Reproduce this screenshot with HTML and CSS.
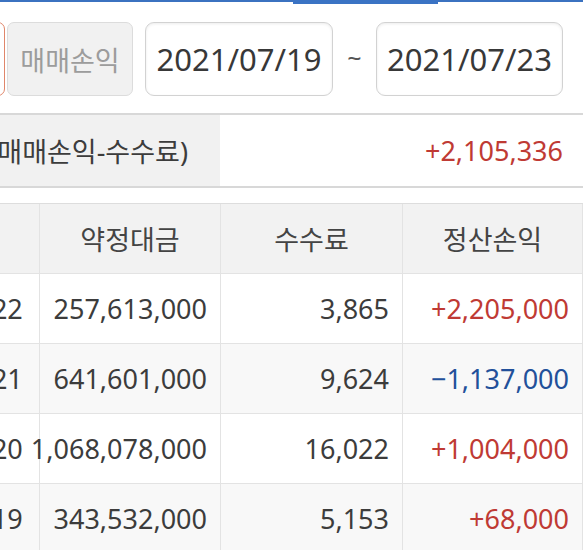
FILE: index.html
```html
<!DOCTYPE html>
<html lang="ko">
<head>
<meta charset="utf-8">
<title>매매손익</title>
<link rel="stylesheet" href="styles.css">
</head>
<body>
<div class="viewport">
  <div class="page">
    <div class="tabs">
      <div class="tab"></div>
      <div class="tab"></div>
      <div class="tab"></div>
      <div class="tab active"></div>
      <div class="tab"></div>
    </div>

    <div class="filter">
      <div class="seg seg-on">일별손익</div>
      <div class="seg seg-off">매매손익</div>
      <div class="date">2021/07/19</div>
      <div class="tilde">~</div>
      <div class="date date-end">2021/07/23</div>
    </div>

    <div class="summary">
      <div class="sum-label">정산손익(매매손익-수수료)</div>
      <div class="sum-value up">+2,105,336</div>
    </div>

    <div class="table">
      <div class="th">일자</div>
      <div class="th">약정대금</div>
      <div class="th">수수료</div>
      <div class="th">정산손익</div>

      <div class="td c">2021/07/22</div>
      <div class="td">257,613,000</div>
      <div class="td">3,865</div>
      <div class="td up">+2,205,000</div>

      <div class="td c alt">2021/07/21</div>
      <div class="td alt">641,601,000</div>
      <div class="td alt">9,624</div>
      <div class="td alt down">−1,137,000</div>

      <div class="td c">2021/07/20</div>
      <div class="td">1,068,078,000</div>
      <div class="td">16,022</div>
      <div class="td up">+1,004,000</div>

      <div class="td c alt">2021/07/19</div>
      <div class="td alt">343,532,000</div>
      <div class="td alt">5,153</div>
      <div class="td alt up">+68,000</div>
    </div>
  </div>
</div>
</body>
</html>
```

FILE: styles.css
```css
html, body {
  margin: 0;
  padding: 0;
  background: #ffffff;
}

body {
  font-family: "Noto Sans", "Noto Sans CJK KR", sans-serif;
  color: #3a3a3a;
}

.viewport {
  width: 583px;
  height: 550px;
  overflow: hidden;
  display: flex;
  justify-content: flex-end;
}

.page {
  flex: 0 0 726px;
  width: 726px;
}

/* tab indicator strip */
.tabs {
  display: flex;
  align-items: flex-start;
  height: 4px;
}

.tab {
  flex: 1;
  height: 2px;
  background: #3b72c0;
}

.tab.active {
  height: 4px;
  background: #3a73c4;
}

/* filter row */
.filter {
  margin-top: 18px;
  height: 74px;
  display: flex;
  align-items: center;
  justify-content: flex-end;
  padding-right: 20px;
}

.seg {
  box-sizing: border-box;
  width: 126px;
  height: 74px;
  border-radius: 7px;
  display: flex;
  align-items: center;
  justify-content: center;
  font-size: 27px;
}

.seg-on {
  border: 1px solid #e0866a;
  color: #d9623f;
  margin-right: 2px;
  justify-content: flex-start;
  padding-left: 12px;
}

.seg-off {
  border: 1px solid #dcdcdc;
  background: #f1f1f1;
  color: #9c9c9c;
  margin-right: 12px;
}

.date {
  box-sizing: border-box;
  width: 188px;
  height: 74px;
  border: 1px solid #d2d2d2;
  border-radius: 9px;
  background: #ffffff;
  box-shadow: inset 0 1px 3px rgba(0, 0, 0, 0.08);
  display: flex;
  align-items: center;
  justify-content: center;
  font-size: 31px;
  color: #383838;
}

.date-end {
  width: 187px;
}

.tilde {
  width: 43px;
  text-align: center;
  font-size: 25px;
  line-height: 1;
  margin-top: -4px;
  color: #555555;
}

/* summary */
.summary {
  margin-top: 17px;
  display: grid;
  grid-template-columns: 363px 363px;
  border-top: 2px solid #d8d8d8;
  border-bottom: 2px solid #d8d8d8;
  height: 71px;
}

.sum-label {
  background: #f1f1f1;
  display: flex;
  align-items: center;
  justify-content: flex-end;
  padding-right: 32px;
  font-size: 27px;
  color: #3c3c3c;
  white-space: nowrap;
  overflow: hidden;
}

.sum-value {
  display: flex;
  align-items: center;
  justify-content: flex-end;
  padding-right: 20px;
  font-size: 27px;
}

/* table */
.table {
  margin-top: 15px;
  display: grid;
  grid-template-columns: 183px 181px 182px 180px;
  border-top: 1px solid #dddddd;
}

.th, .td {
  box-sizing: border-box;
  height: 70px;
  border-bottom: 1px solid #e3e3e3;
  border-right: 1px solid #e3e3e3;
  display: flex;
  align-items: center;
  font-size: 27px;
  white-space: nowrap;
}

.th {
  background: #f2f2f2;
  justify-content: center;
  color: #444444;
}

.td {
  justify-content: flex-end;
  padding-right: 13px;
  color: #3c3c3c;
  background: #ffffff;
}

.td.c {
  justify-content: center;
  padding-right: 0;
  padding-left: 6px;
}

.td.alt {
  background: #f8f8f8;
}

.up {
  color: #bf3a34 !important;
}

.down {
  color: #22509a !important;
}
```
